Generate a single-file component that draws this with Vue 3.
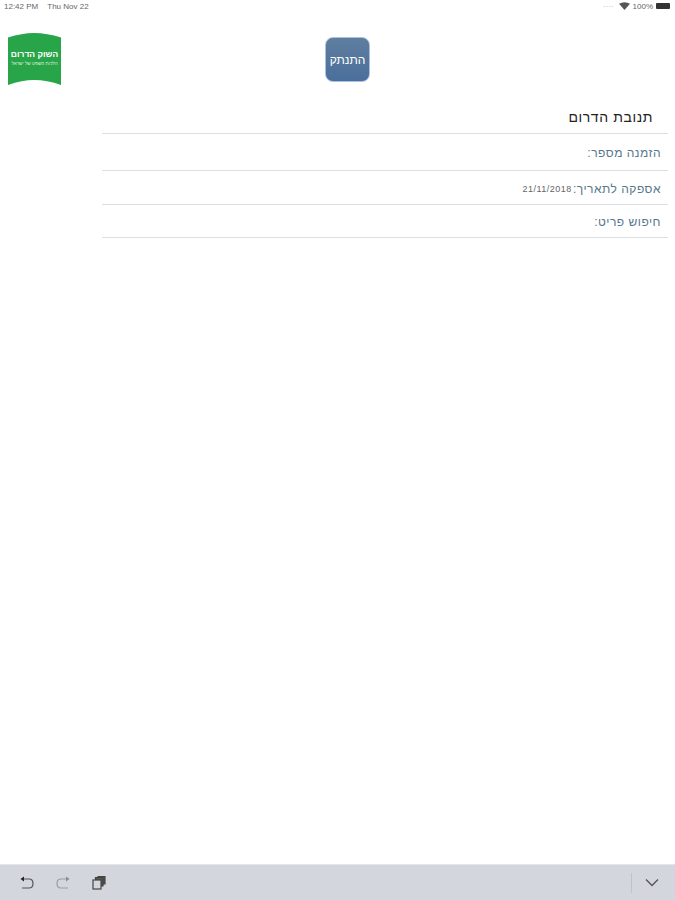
<template>
    <div class="page">
        <div class="statusBar">
            <span class="statusBar__time">12:42 PM</span>
            <span class="statusBar__date">Thu Nov 22</span>
            <span class="statusBar__right">
                <span class="statusBar__dots">····</span>
                <svg class="statusBar__wifi" width="11" height="8" viewBox="0 0 11 8">
                    <path d="M0 1.8 Q5.5 -1.4 11 1.8 L5.5 8 Z" fill="#555" />
                </svg>
                <span class="statusBar__pct">100%</span>
                <span class="statusBar__battery"></span>
            </span>
        </div>

        <header class="topRow">
            <svg class="logo" width="53" height="53" viewBox="0 0 53 53">
                <path d="M0 4.5 Q14 0 26 0 Q39 0 53 4.5 V52 Q39 47 26 47 Q14 47 0 52 Z" fill="#28a548" />
                <text class="logo__title" x="26.5" y="24" text-anchor="middle" direction="rtl">השוק הדרום</text>
                <text class="logo__sub" x="26.5" y="32" text-anchor="middle" direction="rtl">הלכות משפט של ישראל</text>
            </svg>
            <button class="logoutBtn">התנתק</button>
        </header>

        <section class="orderForm" dir="rtl">
            <h1 class="orderForm__title">{{ title }}</h1>
            <div v-for="row in rows" :key="row.label" class="orderForm__row" :style="{ height: row.height + 'px' }">
                <span class="orderForm__label">{{ row.label }}</span>
                <span v-if="row.value" class="orderForm__value">{{ row.value }}</span>
            </div>
        </section>

        <footer class="toolbar">
            <div class="toolbar__group">
                <svg width="18" height="18" viewBox="0 0 18 18" fill="none" stroke="#555" stroke-width="1.2">
                    <path d="M4 5 H11 Q15 5 15 9.5 Q15 14 11 14 H4" />
                    <path d="M6 2.5 L2.5 5 L6 7.5 Z" fill="#222" stroke="none" />
                </svg>
                <svg width="18" height="18" viewBox="0 0 18 18" fill="none" stroke="#9a9da3" stroke-width="1.2">
                    <path d="M14 5 H7 Q3 5 3 9.5 Q3 14 7 14 H14" />
                    <path d="M12 2.5 L15.5 5 L12 7.5 Z" fill="#8a8d93" stroke="none" />
                </svg>
                <svg width="18" height="18" viewBox="0 0 18 18" fill="#555" stroke="#444" stroke-width="1.2">
                    <path d="M8 3.5 V2.5 H15 V10 H13" />
                    <path d="M5.5 6 V3.5 H13 V12 H11" />
                    <rect x="3" y="6" width="8" height="9" fill="#d3d6dc" />
                </svg>
            </div>
            <div class="toolbar__end">
                <span class="toolbar__divider"></span>
                <svg width="14" height="9" viewBox="0 0 14 9" fill="none" stroke="#555" stroke-width="1.3">
                    <path d="M1 1.5 L7 7.5 L13 1.5" />
                </svg>
            </div>
        </footer>
    </div>
</template>

<script setup>
const title = 'תנובת הדרום';

const rows = [
    { label: 'הזמנה מספר:', height: 37 },
    { label: 'אספקה לתאריך:', value: '21/11/2018', height: 34 },
    { label: 'חיפוש פריט:', height: 33 }
];
</script>

<style>
html, body {
    margin: 0;
    background: #fff;
}
</style>

<style scoped>
.page {
    display: flex;
    flex-direction: column;
    width: 675px;
    height: 900px;
    font-family: "Liberation Sans", Arial, sans-serif;
    background: #fff;
    overflow: hidden;
}

.statusBar {
    display: flex;
    align-items: center;
    height: 14px;
    padding: 0 5px 2px 4px;
    box-sizing: border-box;
    font-size: 8px;
    color: #666;
}

.statusBar__date {
    margin-left: 9px;
}

.statusBar__right {
    display: flex;
    align-items: center;
    gap: 3px;
    margin-left: auto;
}

.statusBar__dots {
    color: #aaa;
    margin-right: 2px;
}

.statusBar__battery {
    width: 14px;
    height: 6px;
    background: #333;
    border-radius: 1px;
}

.topRow {
    display: grid;
    grid-template-columns: 317px auto;
    align-items: start;
    padding: 19px 0 0 8px;
}

.logo__title {
    font-size: 8.5px;
    font-weight: 700;
    fill: #fff;
}

.logo__sub {
    font-size: 4.6px;
    fill: #d8f0dc;
}

.logoutBtn {
    width: 45px;
    height: 45px;
    margin-top: 4px;
    padding: 0;
    border: 1px solid #a9c0de;
    border-radius: 8px;
    background: linear-gradient(#5f7e9f, #4a6f9c);
    color: #fff;
    font: 400 12px "Liberation Sans", Arial, sans-serif;
}

.orderForm {
    margin: 15px 7px 0 102px;
}

.orderForm__title {
    height: 33px;
    margin: 0;
    padding-right: 15px;
    border-bottom: 1px solid #dcdfe0;
    box-sizing: border-box;
    font-size: 14px;
    font-weight: 400;
    line-height: 33px;
    letter-spacing: 0.6px;
    color: #222;
}

.orderForm__row {
    display: flex;
    align-items: center;
    gap: 1px;
    box-sizing: border-box;
    padding: 2px 7px 0 0;
    border-bottom: 1px solid #dcdfe0;
}

.orderForm__label {
    font-size: 12px;
    letter-spacing: 0.5px;
    color: #56778c;
}

.orderForm__value {
    font-size: 9px;
    letter-spacing: 0.5px;
    color: #666;
}

.toolbar {
    display: flex;
    justify-content: space-between;
    align-items: center;
    height: 36px;
    margin-top: auto;
    padding: 0 16px 0 18px;
    background: #d3d6dc;
    border-top: 1px solid #e3e5e8;
    box-sizing: border-box;
}

.toolbar__group {
    display: flex;
    gap: 18px;
}

.toolbar__end {
    display: flex;
    align-items: center;
    gap: 13px;
}

.toolbar__divider {
    width: 1px;
    height: 20px;
    background: #bfc2c8;
}
</style>
